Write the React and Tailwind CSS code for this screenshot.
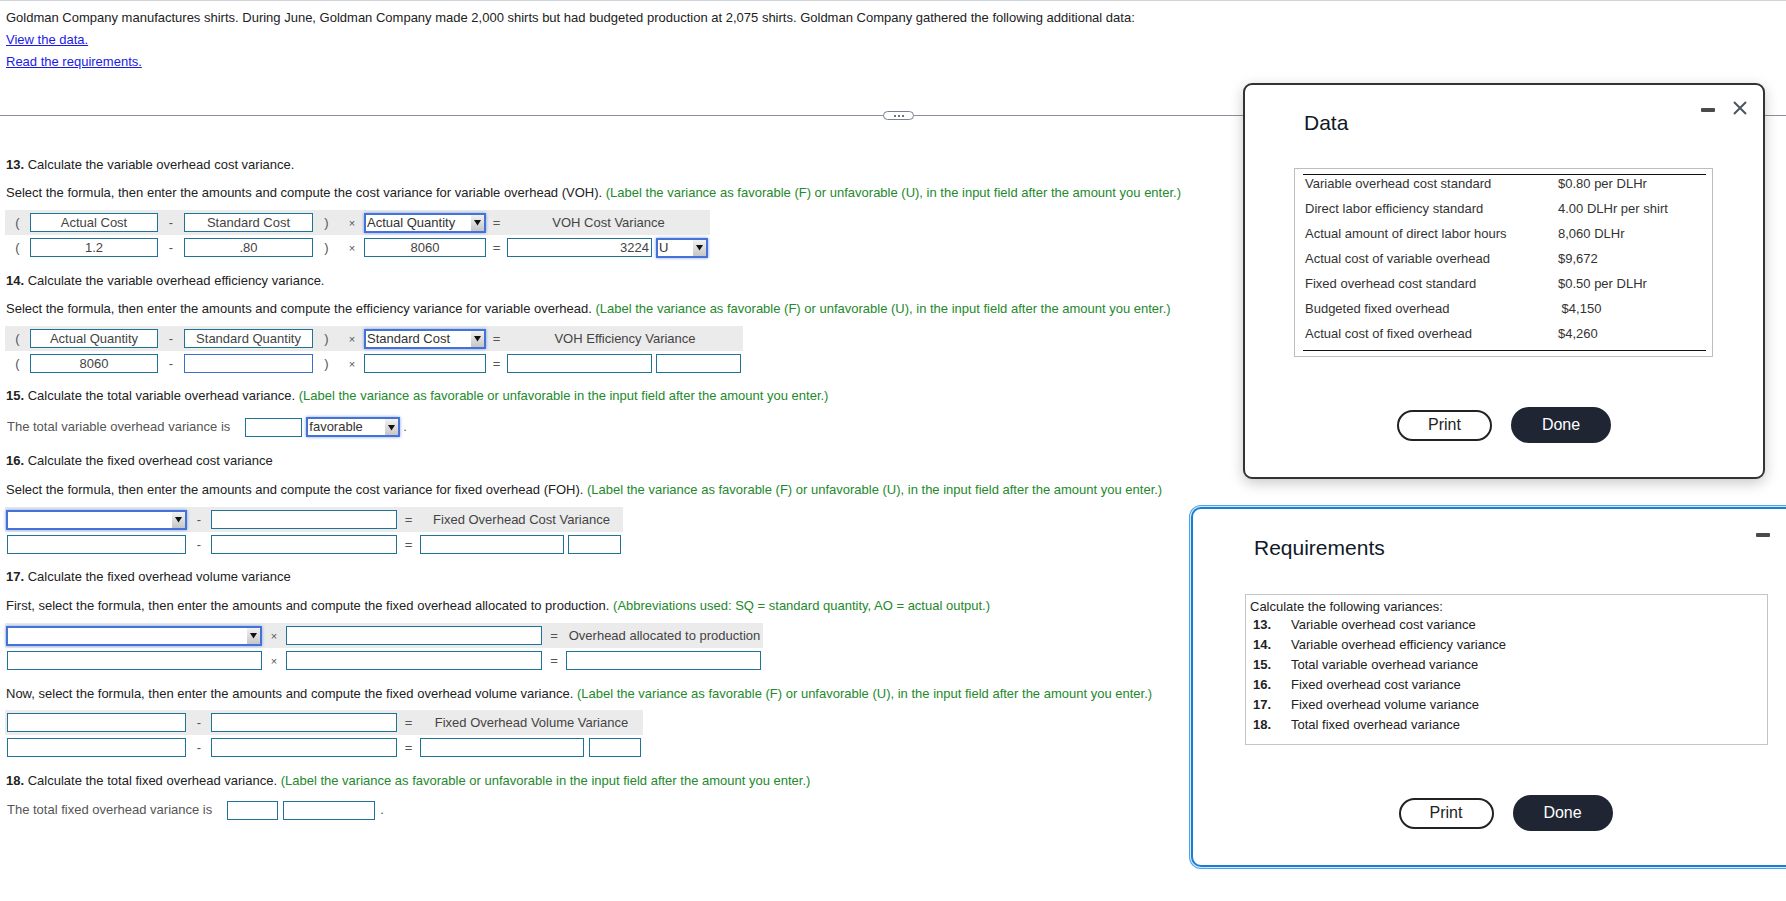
import React from "react";

const green = "text-[#23892b]";

const Box = ({ className = "", right = false, children }) => (
  <div
    className={`h-[19px] shrink-0 border border-[#1f7396] bg-white text-[13px] leading-[17px] text-[#444] ${
      right ? "pr-[2px] text-right" : "text-center"
    } ${className}`}
  >
    {children}
  </div>
);

const Sel = ({ className = "", children }) => (
  <div
    className={`flex h-[20px] shrink-0 items-stretch border-2 border-[#4572d6] bg-white shadow-[0_0_3px_#7aa2ec] ${className}`}
  >
    <span className="flex-1 truncate pl-[1px] text-[13px] leading-[16px] text-[#333]">{children}</span>
    <span className="flex w-[13px] items-center justify-center bg-gradient-to-b from-[#f2f2f2] to-[#c6c6c6]">
      <svg width="7" height="7" viewBox="0 0 7 7">
        <path d="M0 1h7L3.5 6.5z" fill="#111" />
      </svg>
    </span>
  </div>
);

const Op = ({ className = "", children }) => (
  <div className={`flex shrink-0 justify-center text-[13px] leading-[16px] text-[#555] ${className}`}>{children}</div>
);

const Times = ({ className = "" }) => (
  <Op className={className}>
    <span className="text-[11px]">×</span>
  </Op>
);

const Q = ({ n, className = "", children }) => (
  <p className={`ml-[6px] text-[13px] leading-[16px] text-[#222] ${className}`}>
    <b>{n}</b> {children}
  </p>
);

const Label = ({ className = "", children }) => (
  <div className={`shrink-0 text-center text-[13px] leading-[16px] text-[#444] ${className}`}>{children}</div>
);

const Minimize = () => <div className="h-[4px] w-[14px] rounded-[1px] bg-[#4a4a4a]" />;

const Close = () => (
  <svg width="14" height="14" viewBox="0 0 14 14" className="shrink-0">
    <path d="M1 1L13 13M13 1L1 13" stroke="#4b5563" strokeWidth="2" />
  </svg>
);

const Buttons = () => (
  <div className="flex h-[36px] items-center justify-center gap-[19px]">
    <button className="h-[31px] w-[95px] rounded-full border-2 border-[#222] bg-white text-[16px] text-[#222]">
      Print
    </button>
    <button className="h-[36px] w-[100px] rounded-full bg-[#1f2532] text-[16px] text-white">Done</button>
  </div>
);

const dataRows = [
  ["Variable overhead cost standard", "$0.80 per DLHr"],
  ["Direct labor efficiency standard", "4.00 DLHr per shirt"],
  ["Actual amount of direct labor hours", "8,060 DLHr"],
  ["Actual cost of variable overhead", "$9,672"],
  ["Fixed overhead cost standard", "$0.50 per DLHr"],
  ["Budgeted fixed overhead", " $4,150"],
  ["Actual cost of fixed overhead", "$4,260"],
];

const reqs = [
  ["13.", "Variable overhead cost variance"],
  ["14.", "Variable overhead efficiency variance"],
  ["15.", "Total variable overhead variance"],
  ["16.", "Fixed overhead cost variance"],
  ["17.", "Fixed overhead volume variance"],
  ["18.", "Total fixed overhead variance"],
];

const labelNote = "(Label the variance as favorable (F) or unfavorable (U), in the input field after the amount you enter.)";

export default function App() {
  return (
    <div className="relative h-[901px] w-full overflow-hidden border-t border-[#cfd3da] bg-white font-['Liberation_Sans',Arial,sans-serif]">
      {/* question body */}
      <p className="ml-[6px] mt-[9px] text-[13px] leading-[16px] text-[#222]">
        Goldman Company manufactures shirts. During June, Goldman Company made 2,000 shirts but had budgeted production at
        2,075 shirts. Goldman Company gathered the following additional data:
      </p>
      <p className="ml-[6px] mt-[6px] text-[13px] leading-[16px]">
        <a className="text-[#1a1ae6] underline">View the data.</a>
      </p>
      <p className="ml-[6px] mt-[6px] text-[13px] leading-[16px]">
        <a className="text-[#1a1ae6] underline">Read the requirements.</a>
      </p>

      <div className="mt-[41px] flex h-[9px] items-center">
        <div className="h-px w-[883px] bg-[#8a8f99]" />
        <div className="flex h-[9px] w-[31px] items-center justify-center gap-[2px] rounded-full border border-[#7a8190]">
          <span className="h-[2px] w-[2px] bg-[#6b7280]" />
          <span className="h-[2px] w-[2px] bg-[#6b7280]" />
          <span className="h-[2px] w-[2px] bg-[#6b7280]" />
        </div>
        <div className="h-px flex-1 bg-[#8a8f99]" />
      </div>

      {/* 13 */}
      <Q n="13." className="mt-[37px]">Calculate the variable overhead cost variance.</Q>
      <p className="ml-[6px] mt-[12px] text-[13px] leading-[16px] text-[#222]">
        Select the formula, then enter the amounts and compute the cost variance for variable overhead (VOH).{" "}
        <span className={green}>{labelNote}</span>
      </p>
      <div className="ml-[5px] mt-[9px]">
        <div className="flex h-[25px] w-[705px] items-center bg-[#ebebeb]">
          <Op className="w-[25px]">(</Op>
          <Box className="w-[128px]">Actual Cost</Box>
          <Op className="w-[26px]">-</Op>
          <Box className="w-[129px]">Standard Cost</Box>
          <Op className="w-[27px]">)</Op>
          <Times className="w-[24px]" />
          <Sel className="w-[122px]">Actual Quantity</Sel>
          <Op className="w-[21px]">=</Op>
          <Label className="w-[203px]">VOH Cost Variance</Label>
        </div>
        <div className="flex h-[25px] items-center">
          <Op className="w-[25px]">(</Op>
          <Box className="w-[128px]">1.2</Box>
          <Op className="w-[26px]">-</Op>
          <Box className="w-[129px]">.80</Box>
          <Op className="w-[27px]">)</Op>
          <Times className="w-[24px]" />
          <Box className="w-[122px]">8060</Box>
          <Op className="w-[21px]">=</Op>
          <Box right className="w-[145px]">3224</Box>
          <Sel className="ml-[4px] w-[52px]">U</Sel>
        </div>
      </div>

      {/* 14 */}
      <Q n="14." className="mt-[13px]">Calculate the variable overhead efficiency variance.</Q>
      <p className="ml-[6px] mt-[12px] text-[13px] leading-[16px] text-[#222]">
        Select the formula, then enter the amounts and compute the efficiency variance for variable overhead.{" "}
        <span className={green}>{labelNote}</span>
      </p>
      <div className="ml-[5px] mt-[9px]">
        <div className="flex h-[25px] w-[738px] items-center bg-[#ebebeb]">
          <Op className="w-[25px]">(</Op>
          <Box className="w-[128px]">Actual Quantity</Box>
          <Op className="w-[26px]">-</Op>
          <Box className="w-[129px]">Standard Quantity</Box>
          <Op className="w-[27px]">)</Op>
          <Times className="w-[24px]" />
          <Sel className="w-[122px]">Standard Cost</Sel>
          <Op className="w-[21px]">=</Op>
          <Label className="w-[236px]">VOH Efficiency Variance</Label>
        </div>
        <div className="flex h-[25px] items-center">
          <Op className="w-[25px]">(</Op>
          <Box className="w-[128px]">8060</Box>
          <Op className="w-[26px]">-</Op>
          <Box className="w-[129px] border-[#3a6fd0]" />
          <Op className="w-[27px]">)</Op>
          <Times className="w-[24px]" />
          <Box className="w-[122px]" />
          <Op className="w-[21px]">=</Op>
          <Box className="w-[145px]" />
          <Box className="ml-[4px] w-[85px]" />
        </div>
      </div>

      {/* 15 */}
      <Q n="15." className="mt-[12px]">
        Calculate the total variable overhead variance.{" "}
        <span className={green}>
          (Label the variance as favorable or unfavorable in the input field after the amount you enter.)
        </span>
      </Q>
      <div className="ml-[7px] mt-[13px] flex h-[20px] items-center text-[13px] text-[#555]">
        <span>The total variable overhead variance is</span>
        <Box className="ml-[15px] w-[57px]" />
        <Sel className="ml-[4px] w-[94px]">favorable</Sel>
        <span className="ml-[3px]">.</span>
      </div>

      {/* 16 */}
      <Q n="16." className="mt-[16px]">Calculate the fixed overhead cost variance</Q>
      <p className="ml-[6px] mt-[13px] text-[13px] leading-[16px] text-[#222]">
        Select the formula, then enter the amounts and compute the cost variance for fixed overhead (FOH).{" "}
        <span className={green}>{labelNote}</span>
      </p>
      <div className="ml-[5px] mt-[9px]">
        <div className="flex h-[25px] w-[618px] items-center bg-[#ebebeb]">
          <div className="w-[182px] shrink-0">
            <Sel className="ml-[1px] w-[181px]" />
          </div>
          <Op className="w-[24px]">-</Op>
          <Box className="w-[186px]" />
          <Op className="w-[23px]">=</Op>
          <Label className="w-[203px]">Fixed Overhead Cost Variance</Label>
        </div>
        <div className="flex h-[25px] items-center">
          <div className="w-[182px] shrink-0">
            <Box className="ml-[2px] w-[179px]" />
          </div>
          <Op className="w-[24px]">-</Op>
          <Box className="w-[186px]" />
          <Op className="w-[23px]">=</Op>
          <Box className="w-[144px]" />
          <Box className="ml-[4px] w-[53px]" />
        </div>
      </div>

      {/* 17 */}
      <Q n="17." className="mt-[12px]">Calculate the fixed overhead volume variance</Q>
      <p className="ml-[6px] mt-[13px] text-[13px] leading-[16px] text-[#222]">
        First, select the formula, then enter the amounts and compute the fixed overhead allocated to production.{" "}
        <span className={green}>(Abbreviations used: SQ = standard quantity, AO = actual output.)</span>
      </p>
      <div className="ml-[5px] mt-[9px]">
        <div className="flex h-[25px] w-[758px] items-center bg-[#ebebeb]">
          <div className="w-[257px] shrink-0">
            <Sel className="ml-[1px] w-[256px]" />
          </div>
          <Times className="w-[24px]" />
          <Box className="w-[256px]" />
          <Op className="w-[24px]">=</Op>
          <Label className="w-[197px]">Overhead allocated to production</Label>
        </div>
        <div className="flex h-[25px] items-center">
          <div className="w-[257px] shrink-0">
            <Box className="ml-[2px] w-[255px]" />
          </div>
          <Times className="w-[24px]" />
          <Box className="w-[256px]" />
          <Op className="w-[24px]">=</Op>
          <Box className="w-[195px]" />
        </div>
      </div>

      <p className="ml-[6px] mt-[13px] text-[13px] leading-[16px] text-[#222]">
        Now, select the formula, then enter the amounts and compute the fixed overhead volume variance.{" "}
        <span className={green}>{labelNote}</span>
      </p>
      <div className="ml-[5px] mt-[8px]">
        <div className="flex h-[25px] w-[638px] items-center bg-[#ebebeb]">
          <div className="w-[182px] shrink-0">
            <Box className="ml-[2px] w-[179px]" />
          </div>
          <Op className="w-[24px]">-</Op>
          <Box className="w-[186px]" />
          <Op className="w-[23px]">=</Op>
          <Label className="w-[223px]">Fixed Overhead Volume Variance</Label>
        </div>
        <div className="flex h-[25px] items-center">
          <div className="w-[182px] shrink-0">
            <Box className="ml-[2px] w-[179px]" />
          </div>
          <Op className="w-[24px]">-</Op>
          <Box className="w-[186px]" />
          <Op className="w-[23px]">=</Op>
          <Box className="w-[164px]" />
          <Box className="ml-[5px] w-[52px]" />
        </div>
      </div>

      {/* 18 */}
      <Q n="18." className="mt-[13px]">
        Calculate the total fixed overhead variance.{" "}
        <span className={green}>
          (Label the variance as favorable or unfavorable in the input field after the amount you enter.)
        </span>
      </Q>
      <div className="ml-[7px] mt-[11px] flex h-[20px] items-center text-[13px] text-[#555]">
        <span>The total fixed overhead variance is</span>
        <Box className="ml-[15px] w-[51px]" />
        <Box className="ml-[5px] w-[92px]" />
        <span className="ml-[5px]">.</span>
      </div>

      {/* Data window */}
      <div className="absolute left-[1243px] top-[82px] h-[396px] w-[522px] rounded-[9px] border-2 border-[#333] bg-white shadow-[0_4px_14px_rgba(0,0,0,0.22)]">
        <div className="flex items-start justify-between pl-[59px] pr-[16px] pt-[16px]">
          <h2 className="mt-[10px] text-[21px] leading-[24px] text-[#111827]">Data</h2>
          <div className="flex items-start gap-[18px]">
            <div className="mt-[7px]">
              <Minimize />
            </div>
            <Close />
          </div>
        </div>
        <div className="ml-[49px] mt-[33px] w-[419px] border border-[#bdbdbd] px-[8px] pb-[5px] pt-[5px] pr-[6px]">
          <div className="border-y border-[#111]">
            {dataRows.map(([k, v]) => (
              <div key={k} className="grid h-[25px] grid-cols-[255px_1fr] pt-[1px] text-[13px] leading-[16px] text-[#333]">
                <span className="pl-[2px]">{k}</span>
                <span className="whitespace-pre">{v}</span>
              </div>
            ))}
          </div>
        </div>
        <div className="mt-[50px]">
          <Buttons />
        </div>
      </div>

      {/* Requirements window */}
      <div className="absolute left-[1191px] top-[506px] h-[360px] w-[629px] rounded-[10px] border-2 border-[#1a7fd4] bg-white shadow-[0_0_0_1px_#d6eafb,0_0_0_2px_#4da3ea]">
        <div className="flex items-start justify-between pl-[61px] pr-[16px] pt-[24px]">
          <h2 className="mt-[3px] text-[21px] leading-[24px] text-[#111827]">Requirements</h2>
          <div className="flex items-start gap-[18px]">
            <Minimize />
            <Close />
          </div>
        </div>
        <div className="ml-[52px] mt-[34px] w-[523px] border border-[#c4c4c4] px-[4px] pb-[9px] pt-[4px] text-[13px] leading-[16px] text-[#222]">
          <p className="h-[16px]">Calculate the following variances:</p>
          {reqs.map(([n, t]) => (
            <div key={n} className="flex h-[20px] items-center">
              <b className="w-[41px] pl-[3px]">{n}</b>
              <span>{t}</span>
            </div>
          ))}
        </div>
        <div className="mt-[50px]">
          <Buttons />
        </div>
      </div>
    </div>
  );
}
